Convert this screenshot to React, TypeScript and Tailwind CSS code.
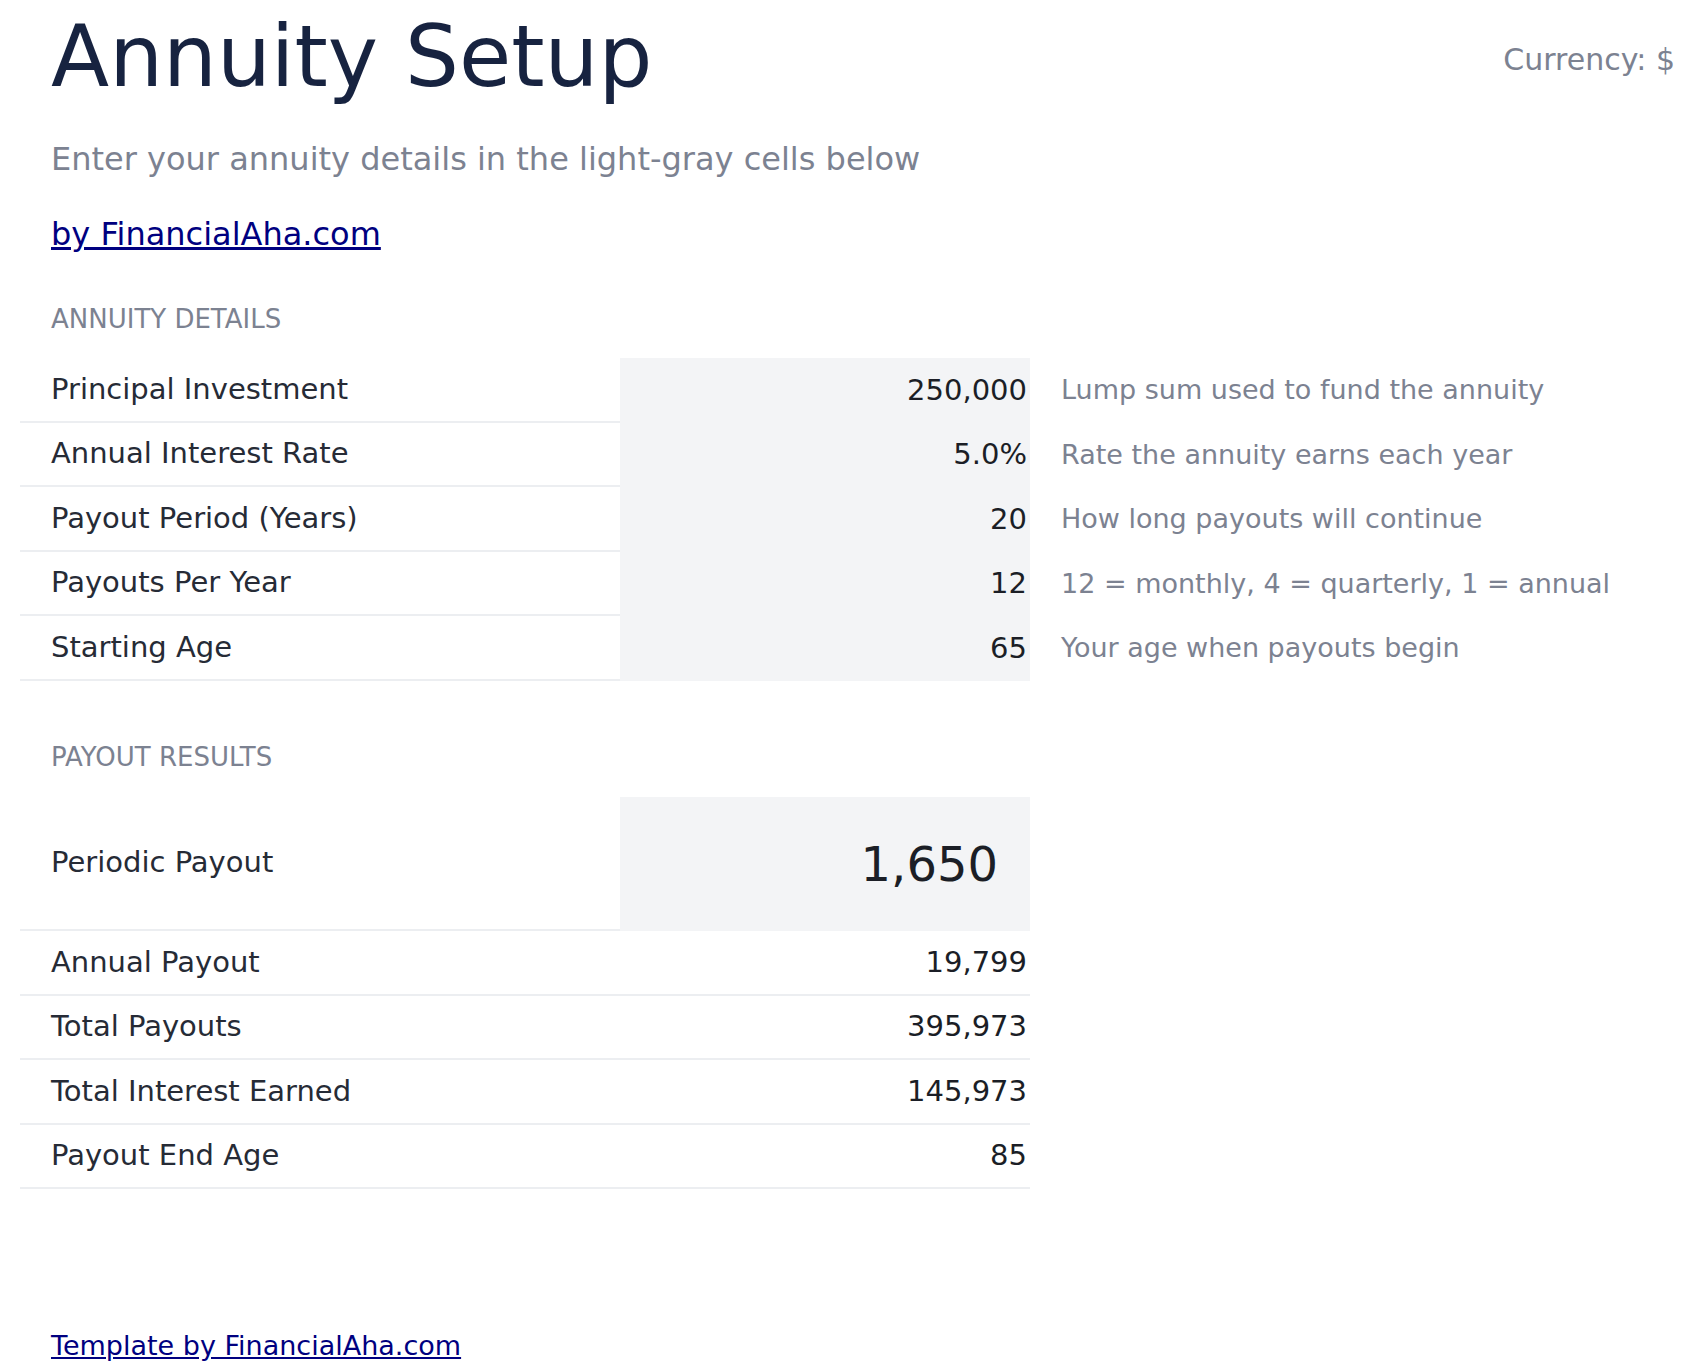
export default function App() {
  const details = [
    ["Principal Investment", "250,000", "Lump sum used to fund the annuity"],
    ["Annual Interest Rate", "5.0%", "Rate the annuity earns each year"],
    ["Payout Period (Years)", "20", "How long payouts will continue"],
    ["Payouts Per Year", "12", "12 = monthly, 4 = quarterly, 1 = annual"],
    ["Starting Age", "65", "Your age when payouts begin"],
  ];
  const results = [
    ["Annual Payout", "19,799"],
    ["Total Payouts", "395,973"],
    ["Total Interest Earned", "145,973"],
    ["Payout End Age", "85"],
  ];
  return (
    <div className="relative min-h-[1368px] bg-white text-[#262b36]" style={{ fontFamily: '"DejaVu Sans", sans-serif' }}>
      <div className="absolute right-[12px] top-[37px] text-[30px] text-[#7c8291]">Currency: $</div>
      <div className="pl-[51px]">
        <h1 className="text-[85px] leading-none pt-[14px] text-[#172340]">Annuity Setup</h1>
        <div className="mt-[44px] text-[32px] leading-none text-[#7c8291]">Enter your annuity details in the light-gray cells below</div>
        <a className="block mt-[43px] text-[32px] leading-none text-[#000080] underline">by FinancialAha.com</a>
        <div className="mt-[56px] text-[26px] leading-none text-[#7c8291]">ANNUITY DETAILS</div>
      </div>
      <div className="ml-[20px] mt-[26px]">
        {details.map(([l, v, n]) => (
          <div key={l} className="flex h-[64.6px]">
            <div className="w-[600px] shrink-0 pl-[31px] flex items-center border-b-2 border-[#eceef1] text-[29px]">{l}</div>
            <div className="w-[410px] shrink-0 bg-[#f3f4f6] flex items-center justify-end pr-[3px] text-[29px] text-[#1b1e26]">{v}</div>
            <div className="pl-[31px] flex items-center whitespace-nowrap text-[27px] text-[#7c8291]">{n}</div>
          </div>
        ))}
      </div>
      <div className="pl-[51px] mt-[63px] text-[26px] leading-none text-[#7c8291]">PAYOUT RESULTS</div>
      <div className="ml-[20px] mt-[27px] w-[1010px]">
        <div className="flex h-[134px]">
          <div className="w-[600px] shrink-0 pl-[31px] flex items-center border-b-2 border-[#eceef1] text-[29px]">Periodic Payout</div>
          <div className="w-[410px] shrink-0 bg-[#f3f4f6] flex items-center justify-end pr-[32px] text-[48px] text-[#1b1e26]">1,650</div>
        </div>
        {results.map(([l, v]) => (
          <div key={l} className="flex h-[64.6px] border-b-2 border-[#eceef1] text-[29px]">
            <div className="w-[600px] shrink-0 pl-[31px] flex items-center">{l}</div>
            <div className="w-[410px] shrink-0 flex items-center justify-end pr-[3px] text-[#1b1e26]">{v}</div>
          </div>
        ))}
      </div>
      <a className="block pl-[51px] mt-[137px] text-[27px] text-[#000080] underline">Template by FinancialAha.com</a>
    </div>
  );
}
